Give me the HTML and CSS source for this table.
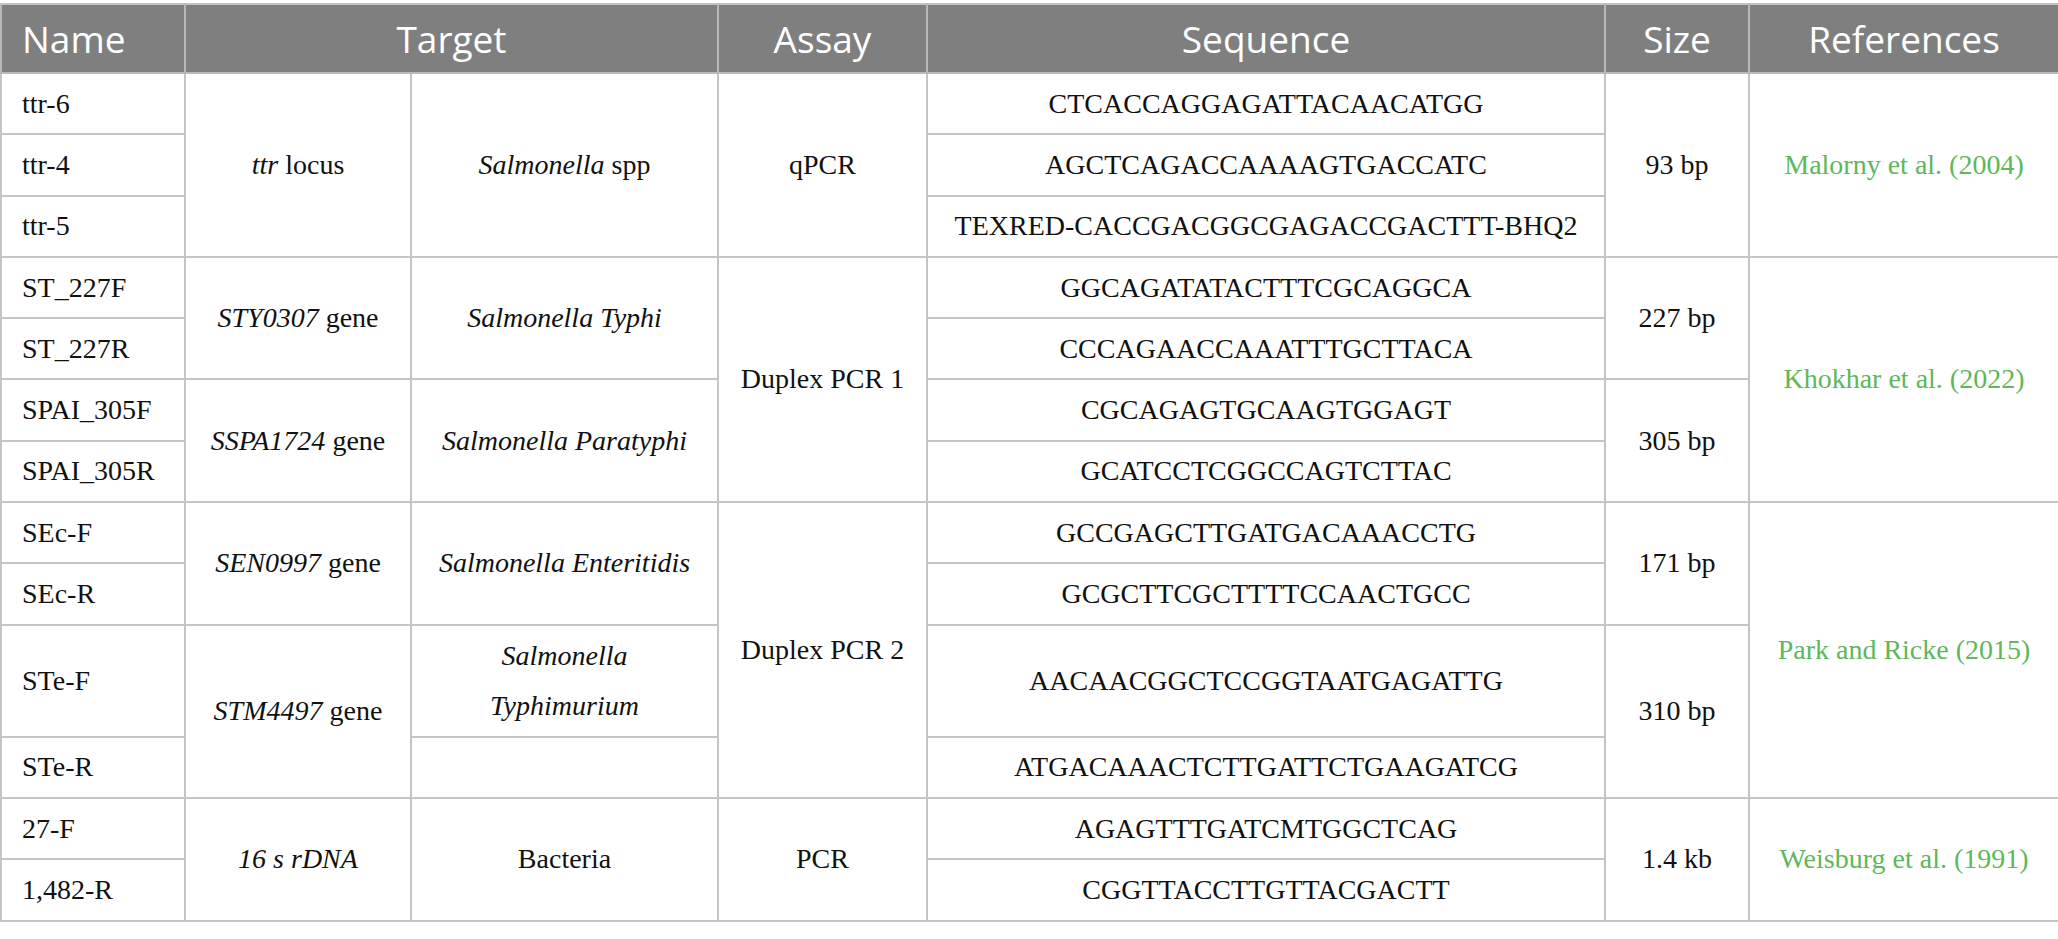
FILE: index.html
```html
<!DOCTYPE html>
<html>
<head>
<meta charset="utf-8">
<link rel="stylesheet" href="styles.css">
</head>
<body>
<table class="primers">
  <colgroup>
    <col class="c-name"><col class="c-gene"><col class="c-org"><col class="c-assay"><col class="c-seq"><col class="c-size"><col class="c-ref">
  </colgroup>
  <thead>
    <tr class="head">
      <th class="left">Name</th>
      <th colspan="2">Target</th>
      <th>Assay</th>
      <th>Sequence</th>
      <th>Size</th>
      <th>References</th>
    </tr>
  </thead>
  <tbody>
    <tr>
      <td class="left">ttr-6</td>
      <td rowspan="3"><i>ttr</i> locus</td>
      <td rowspan="3"><i>Salmonella</i> spp</td>
      <td rowspan="3">qPCR</td>
      <td>CTCACCAGGAGATTACAACATGG</td>
      <td rowspan="3">93 bp</td>
      <td rowspan="3" class="ref">Malorny et al. (2004)</td>
    </tr>
    <tr>
      <td class="left">ttr-4</td>
      <td>AGCTCAGACCAAAAGTGACCATC</td>
    </tr>
    <tr>
      <td class="left">ttr-5</td>
      <td>TEXRED-CACCGACGGCGAGACCGACTTT-BHQ2</td>
    </tr>
    <tr>
      <td class="left">ST_227F</td>
      <td rowspan="2"><i>STY0307</i> gene</td>
      <td rowspan="2"><i>Salmonella Typhi</i></td>
      <td rowspan="4">Duplex PCR 1</td>
      <td>GGCAGATATACTTTCGCAGGCA</td>
      <td rowspan="2">227 bp</td>
      <td rowspan="4" class="ref">Khokhar et al. (2022)</td>
    </tr>
    <tr>
      <td class="left">ST_227R</td>
      <td>CCCAGAACCAAATTTGCTTACA</td>
    </tr>
    <tr>
      <td class="left">SPAI_305F</td>
      <td rowspan="2"><i>SSPA1724</i> gene</td>
      <td rowspan="2"><i>Salmonella Paratyphi</i></td>
      <td>CGCAGAGTGCAAGTGGAGT</td>
      <td rowspan="2">305 bp</td>
    </tr>
    <tr>
      <td class="left">SPAI_305R</td>
      <td>GCATCCTCGGCCAGTCTTAC</td>
    </tr>
    <tr>
      <td class="left">SEc-F</td>
      <td rowspan="2"><i>SEN0997</i> gene</td>
      <td rowspan="2"><i>Salmonella Enteritidis</i></td>
      <td rowspan="4">Duplex PCR 2</td>
      <td>GCCGAGCTTGATGACAAACCTG</td>
      <td rowspan="2">171 bp</td>
      <td rowspan="4" class="ref">Park and Ricke (2015)</td>
    </tr>
    <tr>
      <td class="left">SEc-R</td>
      <td>GCGCTTCGCTTTTCCAACTGCC</td>
    </tr>
    <tr class="tall">
      <td class="left">STe-F</td>
      <td rowspan="2"><i>STM4497</i> gene</td>
      <td class="two"><i>Salmonella<br>Typhimurium</i></td>
      <td>AACAACGGCTCCGGTAATGAGATTG</td>
      <td rowspan="2">310 bp</td>
    </tr>
    <tr>
      <td class="left">STe-R</td>
      <td></td>
      <td>ATGACAAACTCTTGATTCTGAAGATCG</td>
    </tr>
    <tr>
      <td class="left">27-F</td>
      <td rowspan="2"><i>16 s rDNA</i></td>
      <td rowspan="2">Bacteria</td>
      <td rowspan="2">PCR</td>
      <td>AGAGTTTGATCMTGGCTCAG</td>
      <td rowspan="2">1.4 kb</td>
      <td rowspan="2" class="ref">Weisburg et al. (1991)</td>
    </tr>
    <tr>
      <td class="left">1,482-R</td>
      <td>CGGTTACCTTGTTACGACTT</td>
    </tr>
  </tbody>
</table>
</body>
</html>
```

FILE: styles.css
```css
html, body {
  margin: 0;
  padding: 0;
  background: #ffffff;
}

body {
  padding-top: 3px;
}

.primers {
  width: 2058px;
  table-layout: fixed;
  border-collapse: collapse;
  border: 2px solid #c4c4c4;
  font-family: "Liberation Serif", "Times New Roman", serif;
  font-size: 28px;
  color: #111111;
}

.c-name { width: 184px; }
.c-gene { width: 226px; }
.c-org { width: 307px; }
.c-assay { width: 209px; }
.c-seq { width: 678px; }
.c-size { width: 144px; }
.c-ref { width: 310px; }

.primers th,
.primers td {
  border: 2px solid #c4c4c4;
  padding: 0 6px;
  text-align: center;
  vertical-align: middle;
  white-space: nowrap;
}

.head {
  height: 69px;
}

.primers th {
  background: #7f7f7f;
  color: #ffffff;
  font-family: "Open Sans", "Noto Sans", sans-serif;
  font-weight: 400;
  font-size: 37px;
  border-color: #b9b9b9;
  border-top-color: #c4c4c4;
}

.primers tbody tr {
  height: 61.3px;
}

.primers tbody tr.tall {
  height: 112px;
}

.primers .left {
  text-align: left;
  padding-left: 20px;
}

.two {
  line-height: 50px;
}

.ref {
  color: #5cb85a;
}
```
